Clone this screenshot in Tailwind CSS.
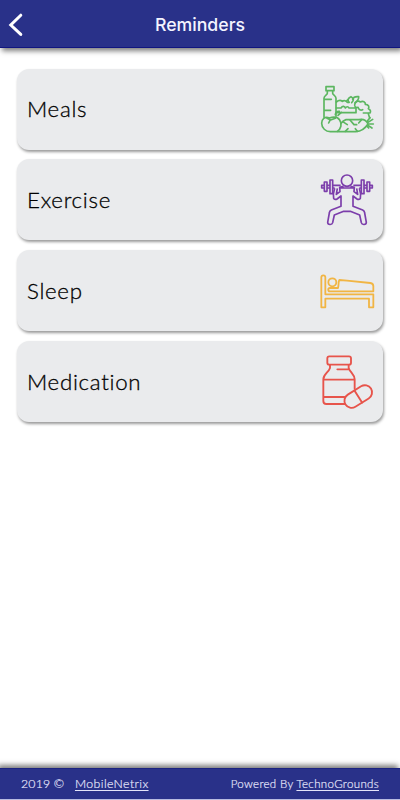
<!DOCTYPE html>
<html lang="en">
<head>
    <meta charset="UTF-8">
    <meta name="viewport" content="width=device-width, initial-scale=1.0">
    <title>Reminders</title>
    <script src="https://cdn.jsdelivr.net/npm/@tailwindcss/browser@4"></script>
</head>
<body class="bg-white h-[800px] flex flex-col overflow-hidden font-['Lato',sans-serif]">
    <header class="h-12 shrink-0 grid grid-cols-[48px_1fr_48px] items-center bg-[#293189] border-b border-[#101580] shadow-[2px_3px_5px_rgba(0,0,0,0.5)]">
        <svg class="w-6 h-12" viewBox="0 0 24 48" fill="none" stroke="#fff" stroke-width="3" stroke-linecap="round"><path d="M20.8 15.2 10.8 25l10 9.4"/></svg>
        <h1 class="text-center text-[#f4f4ff] font-medium text-[17.7px] leading-6 pt-0.5 font-['Inter',sans-serif]">Reminders</h1>
    </header>

    <main class="flex-1 flex flex-col gap-[9.8px] pt-[20.6px] px-[17px] text-[22.3px] font-light tracking-[0.7px] text-black [-webkit-text-stroke:0.3px_black]">
        <div class="h-[81px] rounded-[12px] bg-[#eaebed] shadow-[1px_2px_3px_rgba(0,0,0,0.4)] flex items-center justify-between pl-[10px] pr-[5px]">
            <span>Meals</span>
            <svg class="w-[60px] h-[81px]" viewBox="0 -42 180 243" fill="none" stroke="#5cb660" stroke-width="5" stroke-linecap="round" stroke-linejoin="round">
                <path d="M24 11h24v12H24zM28 24v7c0 5-10 7-10 15v57M44 24v7c0 5 10 7 10 15v54M18 49h22M18 82h20"/>
                <path d="M55 57c6-5 12-7 18-2 5-4 12-2 15 3h5"/>
                <path d="M93 58c-5-7-3-13 6-17 9 4 9 12 2 18M104 49c2-7 9-9 18-8 1 9-5 14-11 18M91 48l-6 7"/>
                <path d="M112 60c4-5 10-7 15-3 8-5 16 0 15 7 9 0 13 7 9 13 7 3 8 9 5 13h-20"/>
                <path d="M111 62c-4 8 2 13 9 11 2 7 8 10 14 7M55 75h14c5-8 11-5 13 0 3-5 9-5 11 0h21v14H55"/>
                <path d="M52 95c1-8 5-11 12-10M60 97l10-9M151 92l4 13"/>
                <path d="M34 105C20 99 11 109 11 121c0 14 12 25 26 25h77c14-1 27-9 36-23-5-11-16-16-28-13H84c-7 2-11 6-15 11"/>
                <path d="M34 105c12-4 25-3 31 6 8 12 4 27-7 34"/>
                <path d="M27 106l11 5 14-5M37 110l-5 10"/>
                <path d="M74 116l14 9M96 111l12 14h8M82 145l8-8M118 145l-6-8M131 110l-9 10"/>
                <path d="M148 114l8-10M150 118l14-9M152 123h14M150 127l12 8M146 129l6 6"/>
            </svg>
        </div>

        <div class="h-[81px] rounded-[12px] bg-[#eaebed] shadow-[1px_2px_3px_rgba(0,0,0,0.4)] flex items-center justify-between pl-[10px] pr-[5px]">
            <span>Exercise</span>
            <svg class="w-[60px] h-[81px]" viewBox="0 -38 180 243" fill="none" stroke="#7c3eab" stroke-width="5" stroke-linejoin="round">
                <circle cx="87" cy="27" r="17"/>
                <path d="M19 41h-8v8h8M19 31h8v28h-8zM27 41h9M27 49h9M36 25h8v41h-8zM44 41h24M44 49h6"/>
                <path d="M155 41h8v8h-8M155 31h-8v28h8zM147 41h-9M147 49h-9M138 25h-8v41h8zM130 41h-24M130 49h-6"/>
                <path d="M50 50c-3 9-5 20-3 30 2 4 7 4 10 2l12-9v31l-29 11c-4 2-6 5-6 9l-5 28c0 8 13 9 15 1l5-23 28-11h20l28 11 5 23c2 8 15 7 15-1l-5-28c0-4-2-7-6-9l-29-11V73l12 9c3 2 8 2 10-2 2-10 0-21-3-30"/>
                <path d="M58 50l-3 18 11-8-1-13 12-3M116 50l3 18-11-8 1-13-12-3M65 49h44"/>
            </svg>
        </div>

        <div class="h-[81px] rounded-[12px] bg-[#eaebed] shadow-[1px_2px_3px_rgba(0,0,0,0.4)] flex items-center justify-between pl-[10px] pr-[5px]">
            <span>Sleep</span>
            <svg class="w-[60px] h-[81px]" viewBox="24 -36 180 243" fill="none" stroke="#f1b544" stroke-width="5.4" stroke-linejoin="round">
                <path d="M34 136V46c0-8 12-8 12 0v51h144v39h-13v-26H46v26z"/>
                <circle cx="67" cy="61" r="12"/>
                <path d="M190 88V72c0-6-4-8-9-9l-70-7-23-2c-4 7-1 15-4 24H60c-7 0-7 10 0 10h130z"/>
            </svg>
        </div>

        <div class="h-[81px] rounded-[12px] bg-[#eaebed] shadow-[1px_2px_3px_rgba(0,0,0,0.4)] flex items-center justify-between pl-[10px] pr-[5px]">
            <span>Medication</span>
            <svg class="w-[60px] h-[81px]" viewBox="24 -12 180 243" fill="none" stroke="#e7544b" stroke-width="5.6" stroke-linecap="round" stroke-linejoin="round">
                <rect x="52" y="34" width="71" height="25" rx="6"/>
                <path d="M60 60v9c-4 13-20 19-20 34v65c0 5 4 9 9 9h55M116 60v9c4 13 18 19 18 34v28M82 73h32M40 104h93M40 156h63"/>
                <g transform="rotate(-32 145 155)">
                    <rect x="100" y="133" width="90" height="43" rx="21.5"/>
                    <path d="M145 133v43"/>
                </g>
            </svg>
        </div>
    </main>

    <footer class="h-8 shrink-0 flex items-center justify-between bg-[#293189] border-t border-t-[#1c2480] border-b border-b-[#b8bbe0] shadow-[-2px_-3px_5px_rgba(0,0,0,0.5)] px-[21px] text-[#e4e4fa] font-light [-webkit-text-stroke:0.2px_#e4e4fa]">
        <p class="text-[12.3px] tracking-[0.2px]">2019 © <a href="#" class="underline underline-offset-2 ml-[7px] tracking-[0.4px]">MobileNetrix</a></p>
        <p class="text-[11.5px] tracking-[0.35px]">Powered By <a href="#" class="underline underline-offset-2">TechnoGrounds</a></p>
    </footer>
</body>
</html>
